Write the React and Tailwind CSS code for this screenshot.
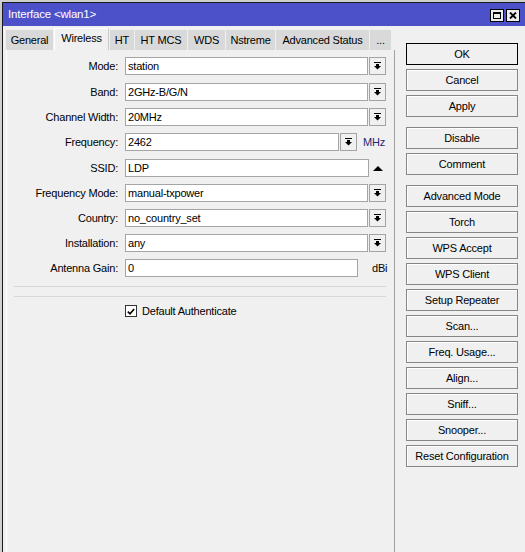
import React from "react";

const font = "font-['Liberation_Sans',Arial,sans-serif]";

const DropIcon = () => (
  <svg width="7" height="8" viewBox="0 0 7 8" className="fill-black">
    <rect x="0" y="0" width="7" height="1" />
    <rect x="2" y="2" width="3" height="2" />
    <polygon points="0,4 7,4 3.5,7.5" />
  </svg>
);

const DropButton = ({ className = "" }) => (
  <div className={`w-[17px] h-[18px] border border-[#a3a3a3] bg-[#f0f0f0] flex items-center justify-center ${className}`}>
    <DropIcon />
  </div>
);

const Row = ({ label, value, inputClass, className = "", children }) => (
  <div className={`flex items-center h-[18px] ${className}`}>
    <div className="w-[112px] text-right pr-[1px] whitespace-nowrap">{label}:</div>
    <div className={`ml-[6px] h-[18px] bg-white border border-[#a5a5a5] flex items-center pl-[2px] whitespace-nowrap ${inputClass}`}>
      {value}
    </div>
    {children}
  </div>
);

const Btn = ({ children, primary, className = "" }) => (
  <div
    className={`h-[22px] w-[112px] flex items-center justify-center border bg-[#f0f0f0] whitespace-nowrap ${
      primary ? "border-black" : "border-[#868686] shadow-[inset_1px_1px_0_#ffffff]"
    } ${className}`}
  >
    {children}
  </div>
);

const tabs = [
  { name: "General", w: "w-[47px]" },
  { name: "Wireless", w: "w-[55px]", active: true },
  { name: "HT", w: "w-[24px]" },
  { name: "HT MCS", w: "w-[52px]" },
  { name: "WDS", w: "w-[37px]" },
  { name: "Nstreme", w: "w-[49px]" },
  { name: "Advanced Status", w: "w-[93px]" },
  { name: "...", w: "w-[21px]" },
];

export default function App() {
  return (
    <div className={`w-[525px] h-[552px] overflow-hidden bg-[#cfcfcf] pl-[2px] pt-[2px] flex flex-col text-[11px] tracking-[-0.2px] text-black ${font}`}>
      <div className="flex-1 flex flex-col border-l border-t border-[#1a1a1a] min-h-0">
        {/* Title bar */}
        <div className="h-[23px] bg-[#4c50c9] flex items-center justify-between pl-[5px] pr-[5px]">
          <span className="text-white text-[11.5px]">Interface &lt;wlan1&gt;</span>
          <div className="flex gap-[2px] mt-[2px]">
            <div className="w-[14px] h-[13px] bg-[#ececec] border border-black flex items-center justify-center">
              <div className="w-[8px] h-[7px] border border-black border-t-2" />
            </div>
            <div className="w-[14px] h-[13px] bg-[#ececec] border border-black flex items-center justify-center">
              <svg width="8" height="7" viewBox="0 0 8 7">
                <path d="M1 0.5 L7 6.5 M7 0.5 L1 6.5" stroke="black" strokeWidth="1.8" />
              </svg>
            </div>
          </div>
        </div>

        {/* Body */}
        <div className="flex-1 flex bg-[#f0f0f0] min-h-0">
          {/* Left: tabs + panel */}
          <div className="w-[392px] pl-[3px] flex flex-col">
            <div className="h-[24px] flex items-end gap-[1px]">
              {tabs.map((t) =>
                t.active ? (
                  <div
                    key={t.name}
                    className={`${t.w} h-[22px] bg-[#f0f0f0] border-t border-l border-white border-r border-r-[#c8c8c8] flex items-center justify-center pb-[3px] whitespace-nowrap`}
                  >
                    {t.name}
                  </div>
                ) : (
                  <div
                    key={t.name}
                    className={`${t.w} h-[20px] bg-[#d9d9d9] flex items-center justify-center whitespace-nowrap`}
                  >
                    {t.name}
                  </div>
                )
              )}
            </div>

            <div className="flex-1 border-l border-white border-r border-r-[#a0a0a0] pt-[7px]">
              <div className="flex flex-col gap-[7px]">
                <Row label="Mode" value="station" inputClass="w-[243px]">
                  <DropButton className="ml-[1px]" />
                </Row>
                <Row label="Band" value="2GHz-B/G/N" inputClass="w-[243px]" className="mt-[1px]">
                  <DropButton className="ml-[1px]" />
                </Row>
                <Row label="Channel Width" value="20MHz" inputClass="w-[243px]">
                  <DropButton className="ml-[1px]" />
                </Row>
                <Row label="Frequency" value="2462" inputClass="w-[214px]">
                  <DropButton className="ml-[1px]" />
                  <span className="ml-[6px] text-[#1e2870]">MHz</span>
                </Row>
                <Row label="SSID" value="LDP" inputClass="w-[244px]" className="mt-[1px]">
                  <svg width="10" height="5" viewBox="0 0 10 5" className="ml-[4px]">
                    <polygon points="0,5 10,5 5,0" fill="black" />
                  </svg>
                </Row>
                <Row label="Frequency Mode" value="manual-txpower" inputClass="w-[243px]">
                  <DropButton className="ml-[1px]" />
                </Row>
                <Row label="Country" value="no_country_set" inputClass="w-[243px]">
                  <DropButton className="ml-[1px]" />
                </Row>
                <Row label="Installation" value="any" inputClass="w-[243px]">
                  <DropButton className="ml-[1px]" />
                </Row>
                <Row label="Antenna Gain" value="0" inputClass="w-[233px]">
                  <span className="ml-[14px]">dBi</span>
                </Row>
              </div>

              <div className="ml-[7px] w-[372px] h-px bg-[#d8d8d8] mt-[9px]" />
              <div className="ml-[7px] w-[372px] h-px bg-[#d8d8d8] mt-[9px]" />

              <div className="flex items-center ml-[118px] mt-[6px]">
                <div className="w-[12px] h-[12px] border border-[#333333] bg-white flex items-center justify-center">
                  <svg width="8" height="7" viewBox="0 0 8 7">
                    <path d="M0.8 3.6 L3 5.8 L7.2 1" stroke="black" strokeWidth="1.6" fill="none" />
                  </svg>
                </div>
                <span className="ml-[5px]">Default Authenticate</span>
              </div>
            </div>
          </div>

          {/* Right: buttons */}
          <div className="flex-1 pl-[11px] pt-[17px] flex flex-col gap-[4px]">
            <Btn primary>OK</Btn>
            <Btn>Cancel</Btn>
            <Btn>Apply</Btn>
            <Btn className="mt-[6px]">Disable</Btn>
            <Btn>Comment</Btn>
            <Btn className="mt-[6px]">Advanced Mode</Btn>
            <Btn>Torch</Btn>
            <Btn>WPS Accept</Btn>
            <Btn>WPS Client</Btn>
            <Btn>Setup Repeater</Btn>
            <Btn>Scan...</Btn>
            <Btn>Freq. Usage...</Btn>
            <Btn>Align...</Btn>
            <Btn>Sniff...</Btn>
            <Btn>Snooper...</Btn>
            <Btn>Reset Configuration</Btn>
          </div>
        </div>
      </div>
    </div>
  );
}
